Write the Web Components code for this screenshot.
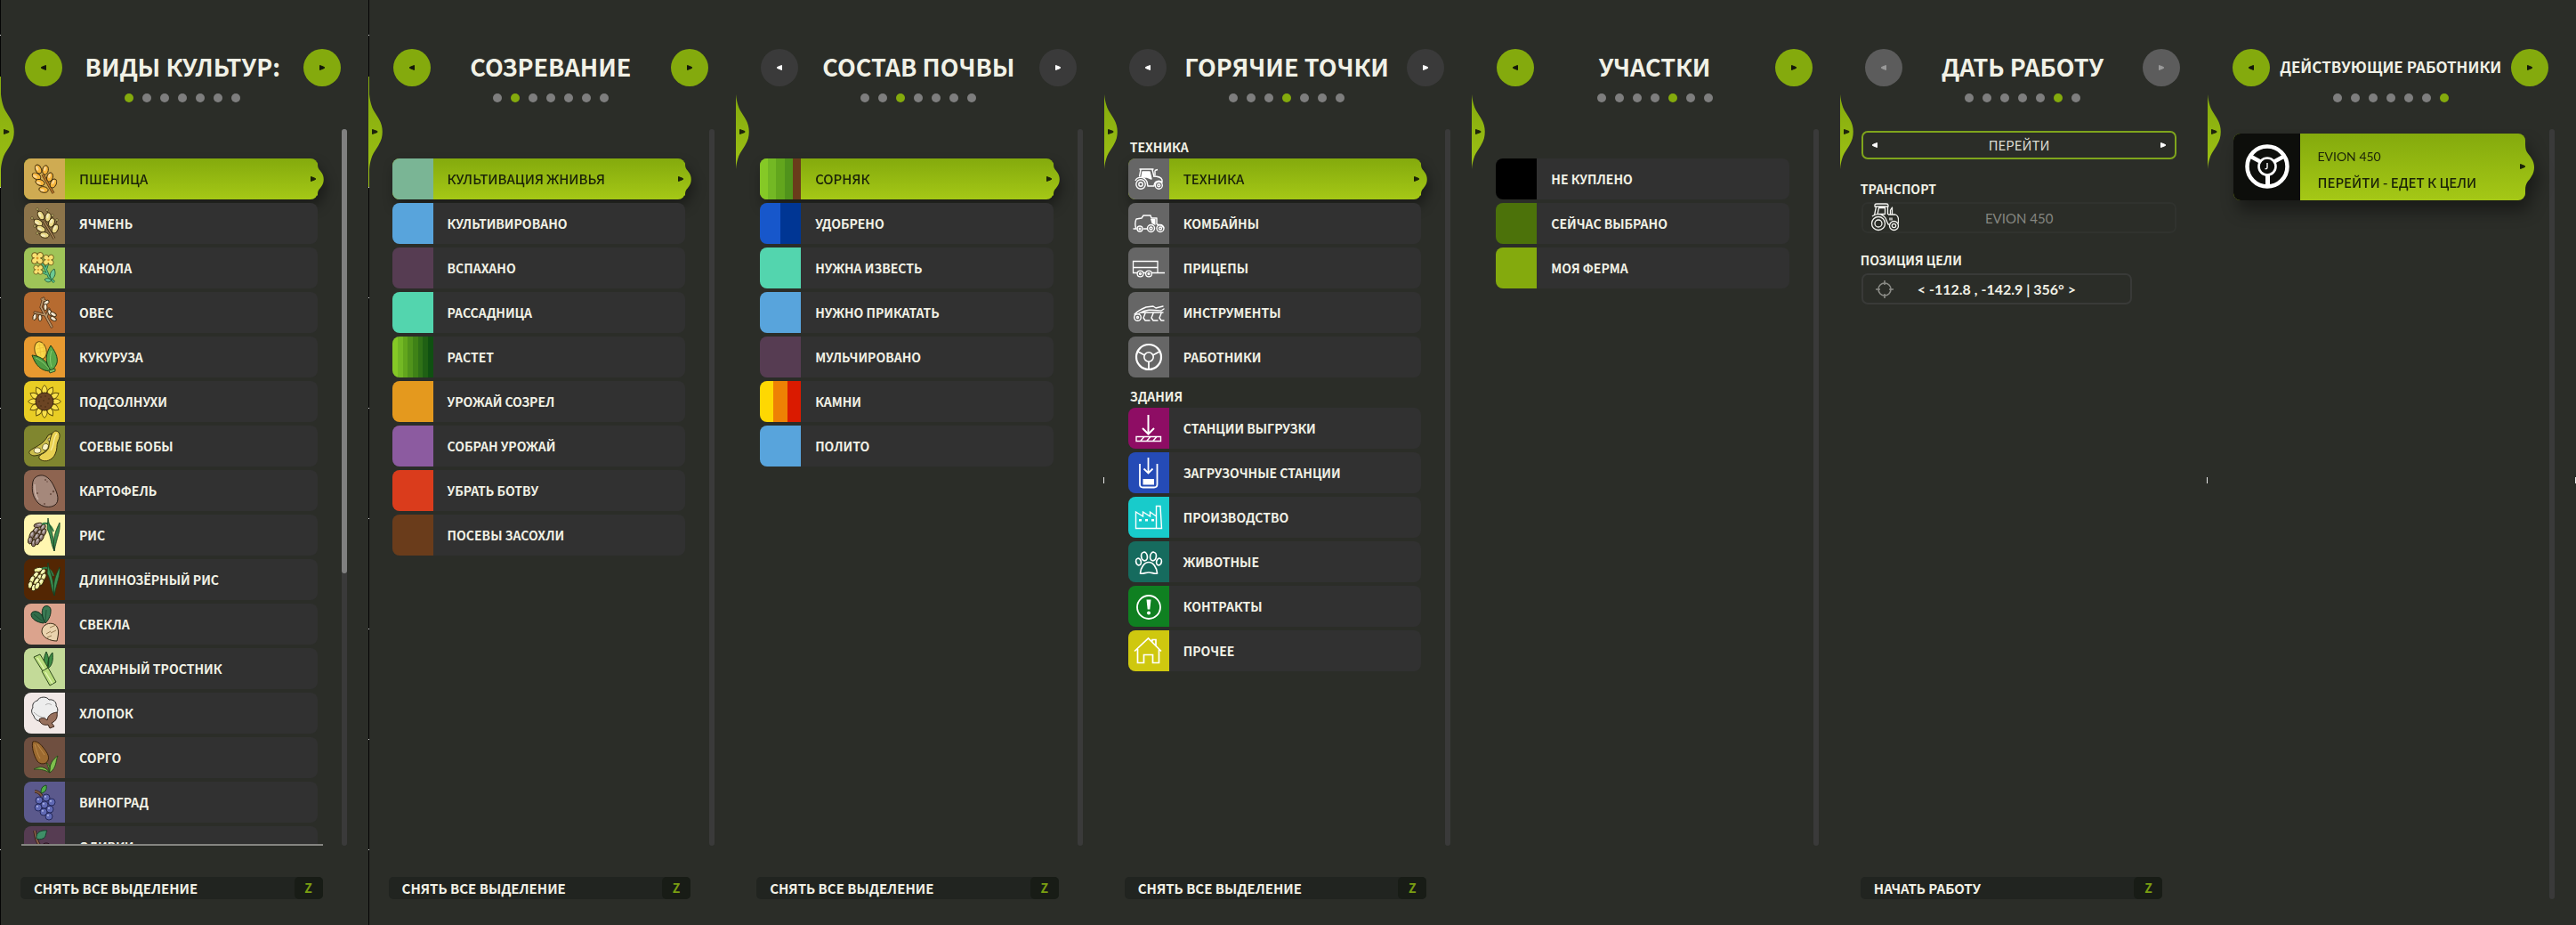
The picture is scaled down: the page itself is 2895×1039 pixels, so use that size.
<!DOCTYPE html>
<html lang="ru">
<head>
<meta charset="utf-8">
<title>Фильтры карты</title>
<style>
  html, body { margin: 0; height: 100%; background: #2b2d28; }
  body {
    --green: #84aa0d;
    --text: #f1f1e6;
    font-family: "Noto Sans CJK SC", "Noto Sans", sans-serif;
    font-size: 14px;
    line-height: 18px;
    color: var(--text);
  }
</style>
</head>
<body>
<map-filters></map-filters>

<script>
/* ---------- icon drawings, all on a 46 x 46 canvas ---------- */
const svg = (body, extra = '') => `<svg viewBox="0 0 46 46" aria-hidden="true" ${extra}>${body}</svg>`;
const seed = (x, y, rx, ry, a, fill, st = '#33240c') =>
  `<g transform="rotate(${a} ${x} ${y})"><ellipse cx="${x}" cy="${y}" rx="${rx}" ry="${ry}" fill="${fill}" stroke="${st}" stroke-width=".9"/><ellipse cx="${x - rx * .25}" cy="${y - ry * .25}" rx="${rx * .4}" ry="${ry * .5}" fill="#fff" opacity=".45"/></g>`;
const flower = (x, y, s = 1) => `<g transform="translate(${x} ${y}) scale(${s})">` + [[-3, -3], [3.200, -3.200], [-3.200, 3], [3, 3.200]].map(([a, b]) =>
  `<circle cx="${a}" cy="${b}" r="3.300" fill="#f8e070" stroke="#5b4a10" stroke-width=".9"/>`).join('') +
  `<circle r="3.300" fill="#f8e070"/><circle r="1.400" fill="#dd9a2e"/></g>`;
const rice = fill => [[16, 12, 5, 80], [21, 15, 4.4, 30], [13, 18, 4.4, 40], [17, 21, 4.4, 30], [22, 20, 4.2, 25], [9, 23, 4.4, 25],
  [14, 25, 4.4, 30], [19, 26, 4.2, 30], [7, 29, 4, 10], [11, 32, 4, 15], [15, 30, 4, 25]].map(([x, y, r, a]) => seed(x, y, 2.5, r, a, fill)).join('') +
  `<path d="M20 11c5-3 10 0 13 8" fill="none" stroke="#2e7a45" stroke-width="2"/>
   <path d="M27 4c1 10 6 12 7 37-5-11-3-16-8-25zM40 9c1 10-3 16-6 32-2-14 1-22 6-32z" fill="#3b8e50" stroke="#173d22" stroke-width=".8"/>`;
const wheel = `<g fill="none" stroke="#fff"><circle cx="23" cy="23" r="14" stroke-width="2.2"/><circle cx="23" cy="23" r="5.2" stroke-width="1.6"/><path d="M11 17l7.5 4M35 17l-7.5 4M23 28v9" stroke-width="1.8"/></g>`;
const tractor = `<g fill="none" stroke="#fff" stroke-width="1.4" stroke-linejoin="round">
  <circle cx="14" cy="29" r="5.2"/><circle cx="14" cy="29" r="2.2"/><circle cx="34.3" cy="30.3" r="4"/><circle cx="34.3" cy="30.3" r="1.5"/>
  <path d="M8 25c2-5 10-5 13 1l1 5h7c0-6 6-7 9-4v-3c-1-3-5-4-10-4M12.5 12h16M14 12.500l-1.500 8M27 12.500l2 8"/>
  <path d="M16 15h8l2 8-5-2-6 0z" fill="#fff"/><path d="M30 19.500v-6M30 13.500l3-1"/></g>`;

const ICONS = {
  wheat: svg(`<path d="M21 18l12 21" stroke="#4a2a0c" stroke-width="3"/><path d="M21 18l12 21" stroke="#b87a2c" stroke-width="1.600"/>` +
    [[16, 12, -25], [24, 13, 10], [14, 20, -60], [29, 21, 15], [18, 27, -70], [33, 28, 25], [22, 35, -80]].map(([x, y, a]) => seed(x, y, 3.300, 5.200, a, '#f7b53c')).join('')),
  barley: svg(`<path d="M15 7l4 8M26 8l1 7M9 17l7 5M32 14l-2 8M12 26l6 3M37 19l-2 8M15 34l6 1" stroke="#3d3014" stroke-width=".8"/>` +
    [[15, 7], [26, 8], [9, 17], [32, 14], [12, 26], [37, 19], [15, 34]].map(([x, y]) => `<circle cx="${x}" cy="${y}" r="1.300" fill="#e6d887" stroke="#33280f" stroke-width=".6"/>`).join('') +
    `<path d="M22 20l12 20" stroke="#33240c" stroke-width="3"/><path d="M22 20l12 20" stroke="#a58254" stroke-width="1.600"/>` +
    [[19, 14, -30], [27, 16, 10], [16, 22, -60], [31, 22, 20], [19, 29, -65], [35, 29, 25], [23, 36, -80]].map(([x, y, a]) => seed(x, y, 3.200, 5.200, a, '#ead987')).join('')),
  canola: svg(`<path d="M17 14c6 6 9 14 11 19l6 6M27 17l-3 9M18 26l8 4" fill="none" stroke="#1e5a3a" stroke-width="2.800"/><path d="M17 14c6 6 9 14 11 19l6 6M27 17l-3 9M18 26l8 4" fill="none" stroke="#5cbf86" stroke-width="1.500"/>
    <path d="M31 36c-3-4-2-9 3-12 2 5 1 9-3 12zM31 37c-3-3-6-3-8-1 2 3 5 4 8 1z" fill="#6cc994" stroke="#1c4c30" stroke-width=".8"/>` + flower(15, 12) + flower(27.500, 14, .9) + flower(16, 25, .8)),
  oats: svg(`<g fill="none" stroke-linecap="round"><path d="M31 39L19 17l3-10M25 28l3-9M24 26l-12-3M20 8l6 3" stroke="#4a2c14" stroke-width="3"/><path d="M31 39L19 17l3-10M25 28l3-9M24 26l-12-3M20 8l6 3" stroke="#b89468" stroke-width="1.700"/></g>` +
    [[25, 12, 50], [24, 17, 0], [12, 28, 15], [18, 29, 0], [29, 23, -20], [33, 25, -60], [33, 30, -60]].map(([x, y, a]) => seed(x, y, 2, 3.600, a, '#f0dfc0')).join('')),
  corn: svg(`<ellipse cx="18.500" cy="15.500" rx="6.500" ry="10" transform="rotate(-14 18.500 15.500)" fill="#fbd84a" stroke="#6b4a10"/>
    <path d="M15 10l7-1M14 14l9-2M15 18l9-2M17 6l2 16M21 7l2 15" stroke="#efc03a" stroke-width=".8"/>
    <path d="M9 21c8 1 16 4 22 18-10 0-17-4-22-18z" fill="#4f9a41" stroke="#1d3f18"/><path d="M30 10c7 9 9 17 6 22-2 4-4 5-6 6-7-9-6-18 0-28z" fill="#58a84a" stroke="#1d3f18"/><path d="M28 38l7-2 0 3-6 2z" fill="#7fc267" stroke="#1d3f18" stroke-width=".8"/>
    <path d="M13 24c5 2 11 7 15 12M31 16c-2 6-2 12 0 18" fill="none" stroke="#8dcf76" stroke-width=".9"/>`),
  sunflower: svg(Array.from({ length: 12 }, (_, i) => `<path transform="rotate(${i * 30} 23 23)" d="M23 4.500c4 4 4 8 0 11-4-3-4-7 0-11z" fill="#f8e04a" stroke="#5b4a08" stroke-width=".9"/>`).join('') +
    `<circle cx="23" cy="23" r="10" fill="#6b4423" stroke="#3a2410"/>` +
    [[19, 18], [24, 17], [28, 20], [17, 23], [22, 22], [27, 25], [19, 28], [24, 29]].map(([x, y]) => `<circle cx="${x}" cy="${y}" r=".8" fill="#432a12"/>`).join('')),
  soy: svg(`<path d="M6 29c6-6 15-6 21-18l4-2c0 12-5 24-20 25-4-1-6-3-5-5z" fill="#cdbf4e" stroke="#3a350e"/>
    <ellipse cx="15" cy="28" rx="4" ry="3.200" fill="#fbf3c4" stroke="#5a5218" stroke-width=".8"/><ellipse cx="24" cy="24" rx="3.200" ry="4" transform="rotate(30 24 24)" fill="#fbf3c4" stroke="#5a5218" stroke-width=".8"/><circle cx="29" cy="16" r="2" fill="#fbf3c4" stroke="#5a5218" stroke-width=".8"/>
    <path d="M36 6c5 1 5 7 2 12-2 5 0 8-3 14-3 7-11 10-17 6-3-3 0-5 4-7 8-5 5-8 7-14 1-5 3-11 7-11z" fill="#e8d052" stroke="#3a350e"/><path d="M37 9c-5 5-2 12-7 19" fill="none" stroke="#f9eda0" stroke-width="1.200"/>`),
  potato: svg(`<path d="M18 6c6-1 12 4 16 13 4 8 6 16 1 20-5 4-15 3-20-3C9 29 9 22 9.500 16c.5-6 3-9 8.500-10z" fill="#a5887b" stroke="#2f1f18"/>
    <path d="M12 16c0 6 0 12 4 17" fill="none" stroke="#cdb6ab" stroke-width="1.300"/><g fill="#6a4d40"><circle cx="24" cy="11" r="1"/><circle cx="26" cy="13" r=".8"/><circle cx="15" cy="26" r="1"/><circle cx="33" cy="24" r="1.200"/><circle cx="30" cy="27" r="1"/><circle cx="23" cy="38" r="1"/></g>`),
  rice: svg(rice('#8b7774')),
  longrice: svg(rice('#eef09a')),
  beet: svg(`<path d="M22 22C14 21 8 17 8 12c1-5 9-4 12 1 3 4 3 7 2 9z" fill="#2f6b48" stroke="#12301f"/><path d="M24 22c-4-7-5-14-2-18 3-3 9-1 8 5 0 5-3 10-6 13z" fill="#3a7a54" stroke="#12301f"/>
    <path d="M11 12l10 8M25 7l-1 13" stroke="#1d4a30" stroke-width=".8"/><path d="M24 24c4-3 11-2 13 2 3 5 1 11 0 16-8 0-16-4-17-10 0-4 1-6 4-8z" fill="#ead3ae" stroke="#3a2b16"/><path d="M29 27l7-3M25 34l5-3M30 33l6-3M26 38l5-2" stroke="#8f6f48" stroke-width=".9"/>`),
  cane: svg(`<path d="M26 23c-5-5-4-13-1-19 3 6 4 13 1 19zM27 23c-1-8 1-14 5-18 1 8 0 14-5 18z" fill="#3f8c46" stroke="#183d1c" stroke-width=".9"/>
    <path d="M11 10l7-3 9 15-6 4z" fill="#b9dc7c" stroke="#2f4a1c"/><path d="M20 26l7-4 9 16-7 4z" fill="#b9dc7c" stroke="#2f4a1c"/><path d="M15 11l8 13M24 27l8 13" stroke="#e2f4b4" stroke-width="1.400"/>`),
  cotton: svg(`<path d="M15 9c2-5 11-5 13-1 5-1 9 3 8 7 3 3 2 8-1 10-2 6-8 8-13 7-5 1-10-1-11-6-3-3-3-7-1-9-1-4 1-7 5-8z" fill="#ededed" stroke="#333"/>
    <path d="M11 22c4 4 8 6 13 6M24 14c2-2 5-2 7 0" fill="none" stroke="#a8a8a8"/><path d="M17 30c3-2 6-2 9 1 1-6 5-8 11-9 1 6-1 10-6 12l3 4-5 2-2-4c-5 1-9-1-10-6z" fill="#97705d" stroke="#3a241a"/>`),
  sorghum: svg(`<path d="M10 5c4-1 8 2 11 6 4 5 8 10 6 15-2 5-9 5-12 1-4-6-7-17-5-22z" fill="#9c6a30" stroke="#3a220c"/><path d="M12 8c2 6 3 11 6 16M15 8l8 12" fill="none" stroke="#c08f50" stroke-width=".9"/>
    <path d="M29 40c-5-7-11-8-18-4 6 0 11 0 18 4zM29 40c-1-9 3-15 9-19-3 7-1 13-9 19zM28 39c0-4-1-7-3-10 4 2 5 6 3 10z" fill="#7fc04d" stroke="#26481a" stroke-width=".9"/>`),
  grape: svg(`<path d="M12 11c4 0 6 2 8 5" fill="none" stroke="#3a2418" stroke-width="3.400"/><path d="M12 11c4 0 6 2 8 5" fill="none" stroke="#7a5644" stroke-width="1.800"/><path d="M19 13c0-5 1-8 6-9 1 5-1 8-6 9z" fill="#4fae48" stroke="#1c4a1c"/>` +
    [[17, 21], [25, 18], [31, 23], [23, 26], [16, 29], [29, 31], [22, 34], [28, 39]].map(([x, y]) => `<circle cx="${x}" cy="${y}" r="4" fill="#6069b4" stroke="#1e2352" stroke-width=".9"/><circle cx="${x - 1}" cy="${y - 1.200}" r="1.100" fill="#a9b0e4"/>`).join('')),
  olive: svg(`<path d="M12 5c1 7 2 14 10 22" fill="none" stroke="#2c1a14" stroke-width="3.400"/><path d="M12 5c1 7 2 14 10 22" fill="none" stroke="#8a5f4a" stroke-width="1.800"/><path d="M14 14c-1-7 5-10 12-9-2 3-1 8-5 9-2 1-5 1-7 0z" fill="#3f8f68" stroke="#173d2c"/><ellipse cx="25" cy="23" rx="5" ry="4" fill="#6b3a52" stroke="#1f0f18"/>`),

  tractor: svg(tractor),
  combine: svg(`<g fill="none" stroke="#fff" stroke-width="1.400" stroke-linejoin="round"><circle cx="13" cy="29" r="3"/><circle cx="13" cy="29" r=".8"/><circle cx="25.500" cy="28.500" r="4"/><circle cx="25.500" cy="28.500" r="1.500"/><circle cx="36" cy="28.500" r="4"/><circle cx="36" cy="28.500" r="1.500"/>
    <path d="M9 29c-2-4-1-9 0-11l6-1 2-3h8l1 3h6l0 7M17 29h4M5.500 29h4M32 24l5 1 3 3"/></g><path d="M25 18h5.500v7l-4-2z" fill="#fff"/>`),
  trailer: svg(`<g fill="none" stroke="#fff" stroke-width="1.300"><path d="M5.500 15.500h27.500v13H5.500zM5.500 22.500h27.500M33 28.500h8M5 28.500h30"/><g fill="#666"><circle cx="13.500" cy="29.500" r="3.400"/><circle cx="23" cy="29.500" r="3.400"/></g><circle cx="13.500" cy="29.500" r="1"/><circle cx="23" cy="29.500" r="1"/></g>`),
  plow: svg(`<g fill="none" stroke="#fff" stroke-width="1.400" stroke-linejoin="round" stroke-linecap="round"><circle cx="10.500" cy="28.500" r="3.800"/><circle cx="10.500" cy="28.500" r="1"/><path d="M7 25c4-4 8-6 13-8l8-1 3 2 8-2M12 24c8-5 15-4 25-3l3-2M15 23h24M19 24l-2 5 2 3h5M28 24l-2 5 2 3h5M37 24l-2 5 2 3h3"/></g>`),
  wheel: svg(wheel),
  unload: svg(`<g fill="none" stroke="#fff" stroke-width="2"><path d="M22.500 8v20M16 23l6.500 6.500L29 23"/><path d="M9 32.500h27.500v5H9zM14 37l4-4.500M21 37l4-4.500M28 37l4-4.500" stroke-width="1.400"/></g>`),
  load: svg(`<g fill="none" stroke="#fff" stroke-width="1.800"><path d="M13 13v23q0 3.500 3.500 3.500h12.500q3.500 0 3.500-3.500V13"/><path d="M22.500 6v17M17.500 18.500l5 5 5-5"/></g><path d="M16.500 30h12.500v6.500H16.500z" fill="#fff"/>`),
  factory: svg(`<g fill="none" stroke="#fff" stroke-width="1.400"><path d="M8.500 35.500V17l8 5v-5l8 5v-5l7 5v13.500zM31.500 22V10.500h4.500l1.500 25h-6"/></g><path d="M12 25h3v2.500h-3zM19 25h3v2.500h-3zM26 25h3v2.500h-3z" fill="#fff"/>`),
  paw: svg(`<g fill="none" stroke="#fff" stroke-width="1.700"><ellipse cx="18" cy="17" rx="3.400" ry="4.800" transform="rotate(-8 18 17)"/><ellipse cx="28" cy="17" rx="3.400" ry="4.800" transform="rotate(8 28 17)"/><ellipse cx="11.500" cy="23" rx="2.800" ry="3.900" transform="rotate(-14 11.500 23)"/><ellipse cx="34.500" cy="23" rx="2.800" ry="3.900" transform="rotate(14 34.500 23)"/><path d="M23 23.500c5 0 9 6 9.500 12.500-3 1-6-1-9.500-1s-6.500 2-9.500 1c.5-6.500 4.500-12.500 9.500-12.500z"/></g>`),
  alert: svg(`<circle cx="23" cy="24" r="13" fill="none" stroke="#fff" stroke-width="1.800"/><path d="M20.500 15.500h5l-1.200 11h-2.600z" fill="#fff"/><circle cx="23" cy="30.500" r="2" fill="#fff"/>`),
  house: svg(`<path d="M7 23.500L22.500 9 37 23.500M10.500 21v15.500h7v-9h10v9h7V21M27 12.500v-2h4v7" fill="none" stroke="#fff" stroke-width="1.700"/>`)
};

/* ---------- small building blocks ---------- */
const tri = dir => `<svg class="tri" viewBox="0 0 8 8" width="8" height="8" aria-hidden="true"><path d="${dir === 'left' ? 'M6.500 1.500v5L1.500 4.500v-1z' : 'M1.500 1.500v5L6.500 4.500v-1z'}" fill="currentColor" stroke="currentColor" stroke-linejoin="round"/></svg>`;

const define = (name, render) => customElements.define(name, class extends HTMLElement {
  connectedCallback() {
    if (this.shadowRoot) return;
    this.attachShadow({ mode: 'open' }).innerHTML = render(this);
  }
});

/* round arrow button; tone = green | dark | grey */
define('arrow-button', el => `
  <style>
    :host { display: block; flex: none; }
    button { display: grid; place-items: center; width: 42px; height: 42px; padding: 0; border: 0; border-radius: 50%; background: var(--green); color: #14180a; }
    :host([tone=dark]) button { background: #3a3a3a; color: #fff; }
    :host([tone=grey]) button { background: #5c5c5c; color: #9a9a9a; }
    svg { display: block; }
  </style>
  <button type="button" aria-label="${el.getAttribute('dir-to') === 'left' ? 'Назад' : 'Вперёд'}">${tri(el.getAttribute('dir-to'))}</button>`);

/* row of seven page dots */
define('page-dots', el => `
  <style>
    :host { display: flex; justify-content: center; gap: 10px; }
    i { width: 10px; height: 10px; border-radius: 50%; background: #7e7e7e; }
    i.on { background: var(--green); }
  </style>
  ${Array.from({ length: 7 }, (_, i) => `<i class="${i + 1 == el.getAttribute('page') ? 'on' : ''}"></i>`).join('')}`);

const bulge = (h, w, d) => `<svg class="bulge" viewBox="0 0 ${w} ${h}" width="${w}" height="${h}" aria-hidden="true">
  <defs><linearGradient id="g" gradientUnits="userSpaceOnUse" x1="0" y1="0" x2="0" y2="${h}"><stop offset="0" stop-color="#84aa0d"/><stop offset="1" stop-color="#a5c816"/></linearGradient></defs>
  <path d="${d}" fill="url(#g)"/></svg>`;

/* list row: coloured or illustrated tile, then a label */
define('filter-row', el => `
  <style>
    :host { display: block; }
    button { position: relative; display: flex; align-items: center; width: 100%; height: 46px; padding: 0; border: 0; border-radius: 8px; background: #313131; color: inherit; font: inherit; font-weight: 700; text-align: left; }
    .tile { flex: none; width: 46px; height: 46px; border-radius: 8px 0 0 8px; background: ${el.getAttribute('tile')}; overflow: hidden; }
    .tile svg { display: block; width: 46px; height: 46px; }
    .label { padding: 0 16px; white-space: nowrap; }
    :host([selected]) button { background: linear-gradient(#84aa0d, #a5c816); color: #1b2308; font-size: 15px; font-weight: 500; filter: drop-shadow(3px 8px 7px rgba(0, 0, 0, .38)); }
    .bulge { position: absolute; left: calc(100% - 1px); top: 0; }
    .tri { position: absolute; right: 1px; top: 19px; }
  </style>
  <button type="button" aria-pressed="${el.hasAttribute('selected')}">
    <span class="tile">${ICONS[el.getAttribute('icon')] || ''}</span>
    <span class="label"><slot></slot></span>
    ${el.hasAttribute('selected') ? bulge(46, 8, 'M0 4L1 6C1 12 3 12 5.500 16C8.500 20 8.500 27 5.500 31C3 35 1 35 1 41L0 42z') + tri('right') : ''}
  </button>`);

define('section-label', () => `
  <style>:host { display: flex; align-items: flex-end; height: 26px; padding: 0 2px; font-weight: 700; }</style>
  <slot></slot>`);

/* card of one active worker */
define('worker-card', () => `
  <style>
    :host { display: block; padding-left: 2px; }
    button { position: relative; display: flex; align-items: stretch; width: 100%; height: 75px; padding: 0; border: 0; border-radius: 8px; background: linear-gradient(#84aa0d, #a5c816); color: #1b2308; font: inherit; text-align: left; filter: drop-shadow(5px 12px 9px rgba(0, 0, 0, .4)); }
    .tile { flex: none; width: 75px; border-radius: 8px 0 0 8px; background: #0d0e0b; }
    .tile svg { display: block; width: 75px; height: 75px; }
    .text { display: flex; flex-direction: column; justify-content: flex-end; gap: 11px; padding: 0 19px 11px; white-space: nowrap; }
    .name { font-family: Lato, sans-serif; font-size: 14px; }
    .job { font-size: 15px; font-weight: 500; }
    .bulge { position: absolute; left: calc(100% - 1px); top: 0; }
    .tri { position: absolute; right: -1px; top: 33px; }
  </style>
  <button type="button">
    <span class="tile"><svg viewBox="0 0 75 75" aria-hidden="true"><g fill="none" stroke="#fff"><circle cx="38" cy="37" r="22.500" stroke-width="4.500"/><circle cx="38" cy="37" r="9.500" stroke-width="2.600"/><path d="M20 26l11 6M56 26l-11 6" stroke-width="4.500"/><path d="M38.500 46v13" stroke-width="5"/><path d="M38 33v5q0 2-2.500 1.500" stroke-width="1.400"/></g></svg></span>
    <span class="text"><span class="name"><slot name="name"></slot></span><span class="job"><slot></slot></span></span>
    ${bulge(75, 11, 'M0 5L1 9L1 12C1 22 5 22 8 28C12 34 12 42 8 48C5 54 1 54 1 64L1 67L0 70z')}${tri('right')}
  </button>`);

define('scroll-track', el => `
  <style>
    :host { display: block; flex: none; width: 6px; border-radius: 3px; background: #3a3a3a; }
    i { display: block; height: ${el.getAttribute('thumb') || 0}%; border-radius: 3px; background: #808080; }
  </style><i></i>`);

/* bottom action with its shortcut key */
define('key-action', () => `
  <style>
    :host { display: block; }
    button { display: flex; align-items: center; justify-content: space-between; width: 100%; height: 25px; padding: 0; border: 0; border-radius: 5px; background: #212420; color: inherit; font: inherit; font-size: 15px; font-weight: 700; }
    span { padding: 0 15px; }
    kbd { width: 32px; border-radius: 5px; background: #181c16; color: #7a9e12; font: inherit; font-size: 14px; line-height: 25px; text-align: center; }
  </style>
  <button type="button"><span><slot></slot></span><kbd>Z</kbd></button>`);

/* order form of the sixth page */
define('job-form', () => `
  <style>
    :host { display: flex; flex-direction: column; flex: 1; margin: 2px -22px 0 -3px; }
    .stepper { display: flex; align-items: center; height: 28px; border: 2px solid #7fa51c; border-radius: 7px; }
    .stepper button { display: grid; place-items: center; width: 26px; height: 28px; padding: 0; border: 0; background: none; color: #fff; }
    select { flex: 1; min-width: 0; height: 28px; padding: 0; border: 0; appearance: none; background: none; color: #dcdcd2; font: inherit; font-size: 15px; text-align: center; text-align-last: center; }
    label { display: block; font-weight: 700; }
    .vehicle { margin: 24px 0 6px -1px; }
    .target { margin: 21px 0 6px -1px; }
    .field { display: flex; align-items: center; box-sizing: border-box; height: 35px; padding: 0; border: 2px solid #30322e; border-radius: 7px; background: none; color: #858680; font: 15px Lato, sans-serif; }
    .field.wide { justify-content: center; position: relative; }
    .field .machine { position: absolute; left: 8px; top: -1px; }
    .field.short { width: 304px; gap: 26px; padding: 0 13px; border-color: #393a38; color: var(--text); font: 700 16px Lato, sans-serif; }
  </style>
  <div class="stepper">
    <button type="button" aria-label="Предыдущее задание">${tri('left')}</button>
    <select aria-label="Задание"><option>ПЕРЕЙТИ</option></select>
    <button type="button" aria-label="Следующее задание">${tri('right')}</button>
  </div>
  <label class="vehicle" for="vehicle">ТРАНСПОРТ</label>
  <button id="vehicle" class="field wide" type="button" disabled>
    <svg class="machine" viewBox="0 0 32 32" width="32" height="32" aria-hidden="true"><g fill="none" stroke="#f4f4f0" stroke-width="1.300" stroke-linejoin="round"><circle cx="9" cy="23" r="7.500"/><circle cx="9" cy="23" r="4"/><circle cx="26.500" cy="25.500" r="5"/><circle cx="26.500" cy="25.500" r="2.200"/><path d="M5 2.500q0-1.500 2-1.500h11q2 0 2 1.500v1.500H5zM6.500 4L4.500 14M19.500 4v9M9.500 5.500L8 12.500h8.500v-7zM22.500 13V8l2-3v8M2 15c3-3 11-4 15 2l3 7h1M20 13h8q3 1 3.500 5v5M22 16.500v3M24 16.500v3"/></g></svg>
    EVION 450
  </button>
  <label class="target" for="target">ПОЗИЦИЯ ЦЕЛИ</label>
  <button id="target" class="field short" type="button">
    <svg viewBox="0 0 22 22" width="22" height="22" aria-hidden="true"><g fill="none" stroke="#8a8b86" stroke-width="1.600"><circle cx="11" cy="11" r="7"/><path d="M11 1v5M11 16v5M1 11h5M16 11h5"/></g></svg>
    <span>&lt; -112.8 , -142.9 | 356° &gt;</span>
  </button>`);

/* one page of the map menu */
define('filter-panel', el => {
  const tone = el.getAttribute('tone') || 'green';
  const framed = el.hasAttribute('framed');
  return `
  <style>
    :host { position: relative; display: flex; flex-direction: column; box-sizing: border-box; min-width: 0; height: 100%; padding: 55px 24px 29px 27px; }
    header { display: flex; align-items: center; margin: 0 7px 8px 1px; }
    h2 { flex: 1; margin: 0; padding-bottom: 3px; font-size: ${el.hasAttribute('long') ? 17 : 27}px; line-height: 38px; font-weight: 700; text-align: center; white-space: nowrap; }
    page-dots { margin: 0 7px 30px 1px; }
    .body { display: flex; flex: 1; gap: 27px; min-height: 0; }
    .list { display: flex; flex: 1; flex-direction: column; gap: 4px; min-width: 0; padding-top: ${el.getAttribute('inset') || 33}px; }
    .clip { position: relative; display: flex; flex: 1; min-width: 0; overflow-y: clip; }
    :host([more]) .clip::after { content: ""; position: absolute; z-index: 1; left: -3px; right: -6px; bottom: 0; height: 2px; background: #858581; }
    :host([more]) ::slotted(filter-row) { position: relative; }
    footer { height: 25px; margin: 35px 27px 0 -4px; }
    :host([no-footer]) footer { display: none; }
    .handle { position: absolute; left: 0; top: 86px; }
    .edge { position: absolute; left: 0; top: 0; bottom: 0; width: 1px; background: repeating-linear-gradient(#d8d8d8 0 1px, #050505 1px 124px) 0 86px / 1px 100%, #050505; }
    .tick { position: absolute; left: -1px; top: 536px; width: 1px; height: 7px; background: #e8e8e8; }
    .tick.end { left: auto; right: 0; }
  </style>
  <header>
    <arrow-button dir-to="left" tone="${tone}"></arrow-button>
    <h2>${el.getAttribute('heading')}</h2>
    <arrow-button dir-to="right" tone="${tone}"></arrow-button>
  </header>
  <page-dots page="${el.getAttribute('page')}"></page-dots>
  <div class="body">
    <div class="clip"><div class="list"><slot></slot></div></div>
    <scroll-track thumb="${el.getAttribute('thumb') || 0}" ${el.hasAttribute('no-track') ? 'style="visibility:hidden"' : ''}></scroll-track>
  </div>
  <footer><slot name="action"></slot></footer>
  ${framed ? '<div class="edge"></div>' : ''}
  <svg class="handle" viewBox="0 0 16 124" width="16" height="124" aria-hidden="true">
    <defs><linearGradient id="h" x1="0" y1="0" x2="0" y2="1"><stop offset="0" stop-color="#84aa0d"/><stop offset="1" stop-color="#9ec215"/></linearGradient></defs>
    <path d="${framed ? 'M0 0H1V20C3 38 8 40 12 48C17 56 17 68 12 76C8 84 3 86 1 104V124H0z' : 'M0 20C2 38 7 40 11 48C16 56 16 68 11 76C7 84 2 86 0 104z'}" fill="url(#h)"/>
    <path d="M4.500 59.500v5L10 62.500v-1z" fill="#1d240b" stroke="#1d240b" stroke-linejoin="round"/>
  </svg>
  ${el.hasAttribute('tick') ? '<div class="tick"></div>' : ''}${el.hasAttribute('tick-end') ? '<div class="tick end"></div>' : ''}`;
});

/* whole screen: seven equal pages side by side */
const stripes = (...c) => `linear-gradient(90deg,${c.map((v, i) => `${v} ${i / c.length * 100}% ${(i + 1) / c.length * 100}%`).join(',')})`;
const row = (label, tile, icon = '', sel = false) => `<filter-row tile="${tile}" icon="${icon}" ${sel ? 'selected' : ''}>${label}</filter-row>`;
const clear = '<key-action slot="action">СНЯТЬ ВСЕ ВЫДЕЛЕНИЕ</key-action>';

define('map-filters', () => `
  <style>
    :host { display: grid; grid-template-columns: repeat(7, minmax(0, 1fr)); grid-template-rows: 100%; height: 100vh; overflow: hidden; }
  </style>
  <filter-panel heading="ВИДЫ КУЛЬТУР:" page="1" framed more thumb="62">
    ${row('ПШЕНИЦА', '#cfab52', 'wheat', true)}
    ${row('ЯЧМЕНЬ', '#8c744a', 'barley')}
    ${row('КАНОЛА', '#9fc458', 'canola')}
    ${row('ОВЕС', '#b66b30', 'oats')}
    ${row('КУКУРУЗА', '#e89a30', 'corn')}
    ${row('ПОДСОЛНУХИ', '#e9cd24', 'sunflower')}
    ${row('СОЕВЫЕ БОБЫ', '#80862f', 'soy')}
    ${row('КАРТОФЕЛЬ', '#8e6450', 'potato')}
    ${row('РИС', '#fff6b0', 'rice')}
    ${row('ДЛИННОЗЁРНЫЙ РИС', '#532603', 'longrice')}
    ${row('СВЕКЛА', '#dba38d', 'beet')}
    ${row('САХАРНЫЙ ТРОСТНИК', '#c3da98', 'cane')}
    ${row('ХЛОПОК', '#f1e8e6', 'cotton')}
    ${row('СОРГО', '#6f4f40', 'sorghum')}
    ${row('ВИНОГРАД', '#5b598c', 'grape')}
    ${row('ОЛИВКИ', '#563c52', 'olive')}
    ${clear}
  </filter-panel>
  <filter-panel heading="СОЗРЕВАНИЕ" page="2" framed>
    ${row('КУЛЬТИВАЦИЯ ЖНИВЬЯ', '#7ab595', '', true)}
    ${row('КУЛЬТИВИРОВАНО', '#58a4dc')}
    ${row('ВСПАХАНО', '#563c52')}
    ${row('РАССАДНИЦА', '#53d5ae')}
    ${row('РАСТЕТ', stripes('#85c926', '#73b824', '#62a61d', '#50931b', '#3f8217', '#2f7117', '#1f6014', '#0f5011'))}
    ${row('УРОЖАЙ СОЗРЕЛ', '#e4991e')}
    ${row('СОБРАН УРОЖАЙ', '#8c5ba0')}
    ${row('УБРАТЬ БОТВУ', '#da3c1c')}
    ${row('ПОСЕВЫ ЗАСОХЛИ', '#6a3c1b')}
    ${clear}
  </filter-panel>
  <filter-panel heading="СОСТАВ ПОЧВЫ" page="3" tone="dark">
    ${row('СОРНЯК', stripes('#85c926', '#73b824', '#62a61d', '#50931b', '#6a3c1b'), '', true)}
    ${row('УДОБРЕНО', stripes('#1757cb', '#003694'))}
    ${row('НУЖНА ИЗВЕСТЬ', '#53d5ae')}
    ${row('НУЖНО ПРИКАТАТЬ', '#58a4dc')}
    ${row('МУЛЬЧИРОВАНО', '#563c52')}
    ${row('КАМНИ', stripes('#fed802', '#ee8104', '#da1a00'))}
    ${row('ПОЛИТО', '#58a4dc')}
    ${clear}
  </filter-panel>
  <filter-panel heading="ГОРЯЧИЕ ТОЧКИ" page="4" tone="dark" inset="3" tick>
    <section-label>ТЕХНИКА</section-label>
    ${row('ТЕХНИКА', '#666', 'tractor', true)}
    ${row('КОМБАЙНЫ', '#666', 'combine')}
    ${row('ПРИЦЕПЫ', '#666', 'trailer')}
    ${row('ИНСТРУМЕНТЫ', '#666', 'plow')}
    ${row('РАБОТНИКИ', '#666', 'wheel')}
    <section-label>ЗДАНИЯ</section-label>
    ${row('СТАНЦИИ ВЫГРУЗКИ', '#8e0d64', 'unload')}
    ${row('ЗАГРУЗОЧНЫЕ СТАНЦИИ', '#254bb6', 'load')}
    ${row('ПРОИЗВОДСТВО', '#18cbcb', 'factory')}
    ${row('ЖИВОТНЫЕ', '#166b5e', 'paw')}
    ${row('КОНТРАКТЫ', '#0f8021', 'alert')}
    ${row('ПРОЧЕЕ', '#cfc80f', 'house')}
    ${clear}
  </filter-panel>
  <filter-panel heading="УЧАСТКИ" page="5">
    ${row('НЕ КУПЛЕНО', '#000')}
    ${row('СЕЙЧАС ВЫБРАНО', '#4c720a')}
    ${row('МОЯ ФЕРМА', '#84aa0d')}
  </filter-panel>
  <filter-panel heading="ДАТЬ РАБОТУ" page="6" tone="grey" inset="0" no-track>
    <job-form></job-form>
    <key-action slot="action">НАЧАТЬ РАБОТУ</key-action>
  </filter-panel>
  <filter-panel heading="ДЕЙСТВУЮЩИЕ РАБОТНИКИ" long page="7" inset="5" no-footer tick tick-end>
    <worker-card><span slot="name">EVION 450</span>ПЕРЕЙТИ - ЕДЕТ К ЦЕЛИ</worker-card>
  </filter-panel>`);
</script>
</body>
</html>
